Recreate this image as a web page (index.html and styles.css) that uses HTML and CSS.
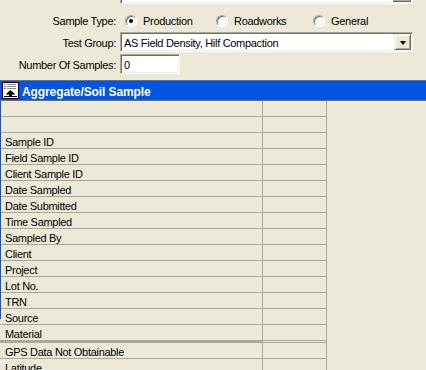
FILE: index.html
```html
<!DOCTYPE html>
<html>
<head>
<meta charset="utf-8">
<link rel="stylesheet" href="styles.css">
</head>
<body>
<div class="top"><div class="topbox"><div class="topbtn"></div></div></div>
<div class="form">
  <div class="frow">
    <span class="lbl">Sample Type:</span>
    <div class="radios">
      <div class="opt o1"><span class="radio on"></span><span>Production</span></div>
      <div class="opt o2"><span class="radio"></span><span>Roadworks</span></div>
      <div class="opt o3"><span class="radio"></span><span>General</span></div>
    </div>
  </div>
  <div class="frow">
    <span class="lbl">Test Group:</span>
    <div class="select"><span class="seltext">AS Field Density, Hilf Compaction</span><span class="dropbtn"><span class="arrow"></span></span></div>
  </div>
  <div class="frow">
    <span class="lbl">Number Of Samples:</span>
    <div class="input"><span class="seltext">0</span></div>
  </div>
</div>
<div class="hdr">
  <svg class="icon" width="17" height="17" viewBox="0 0 17 17">
    <rect x="0.5" y="0.5" width="16" height="16" fill="#fff" stroke="#000"/>
    <g fill="#8c8c8c">
      <rect x="2" y="2" width="2" height="1"/><rect x="5" y="2" width="9" height="1"/>
      <rect x="2" y="4" width="2" height="1"/><rect x="5" y="4" width="9" height="1"/>
      <rect x="2" y="6" width="2" height="1"/><rect x="5" y="6" width="9" height="1"/>
    </g>
    <polygon points="8.5,8 3.5,12.5 13.5,12.5" fill="#000"/>
    <rect x="7" y="12" width="3" height="2" fill="#000"/>
    <rect x="2" y="14" width="13" height="1" fill="#000"/>
  </svg>
  <span class="htext">Aggregate/Soil Sample</span>
</div>
<div class="grid">
  <div class="gr"><div class="c1"></div><div class="c2"></div></div>
  <div class="gr"><div class="c1"></div><div class="c2"></div></div>
  <div class="gr"><div class="c1">Sample ID</div><div class="c2"></div></div>
  <div class="gr"><div class="c1">Field Sample ID</div><div class="c2"></div></div>
  <div class="gr"><div class="c1">Client Sample ID</div><div class="c2"></div></div>
  <div class="gr"><div class="c1">Date Sampled</div><div class="c2"></div></div>
  <div class="gr"><div class="c1">Date Submitted</div><div class="c2"></div></div>
  <div class="gr"><div class="c1">Time Sampled</div><div class="c2"></div></div>
  <div class="gr"><div class="c1">Sampled By</div><div class="c2"></div></div>
  <div class="gr"><div class="c1">Client</div><div class="c2"></div></div>
  <div class="gr"><div class="c1">Project</div><div class="c2"></div></div>
  <div class="gr"><div class="c1">Lot No.</div><div class="c2"></div></div>
  <div class="gr"><div class="c1">TRN</div><div class="c2"></div></div>
  <div class="gr"><div class="c1">Source</div><div class="c2"></div></div>
  <div class="gr"><div class="c1">Material</div><div class="c2"></div></div>
  <div class="gr sep"><div class="c1"></div><div class="c2"></div></div>
  <div class="gr"><div class="c1">GPS Data Not Obtainable</div><div class="c2"></div></div>
  <div class="gr"><div class="c1">Latitude</div><div class="c2"></div></div>
  <div class="blueline"></div>
</div>
</body>
</html>
```
FILE: styles.css
```css
html, body {
  margin: 0;
  padding: 0;
}
body {
  background: #ece9d8;
  font-family: "Liberation Sans", Arial, sans-serif;
  font-size: 11px;
  letter-spacing: -0.3px;
  color: #000;
  width: 426px;
  height: 370px;
  overflow: hidden;
}
.top {
  height: 4px;
  overflow: hidden;
}
.topbox {
  margin-left: 120px;
  width: 293px;
  height: 4px;
  box-sizing: border-box;
  background: #fff;
  border-left: 1px solid #aca899;
  border-right: 1px solid #fff;
  border-bottom: 1px solid #fff;
  box-shadow: inset 1px 0 0 #716f64, inset -1px -1px 0 #f1efe2;
  display: flex;
  justify-content: flex-end;
  align-items: flex-end;
  padding: 0 1px 1px 0;
}
.topbtn {
  width: 18px;
  height: 3px;
  box-sizing: border-box;
  background: #ece9d8;
  border-right: 1px solid #716f64;
  border-bottom: 1px solid #716f64;
  box-shadow: inset -1px -1px 0 #aca899, inset 1px 0 0 #fff;
}
.form {
  padding-top: 6px;
}
.frow {
  display: flex;
  align-items: center;
  height: 20px;
  margin-bottom: 2px;
}
.lbl {
  width: 116px;
  flex: none;
  text-align: right;
  margin-right: 4px;
  padding-top: 1px;
}
.radios {
  display: flex;
  align-items: center;
  padding-left: 5px;
  padding-top: 1px;
}
.opt {
  display: flex;
  align-items: center;
}
.o1 { width: 91px; }
.o2 { width: 97px; }
.radio {
  width: 12px;
  height: 12px;
  box-sizing: border-box;
  border-radius: 50%;
  background: #fff;
  border: 1px solid;
  border-color: #aca899 #fff #fff #aca899;
  box-shadow: inset 1px 1px 0 #716f64, inset -1px -1px 0 #f1efe2;
  margin-right: 6px;
  position: relative;
  flex: none;
}
.radio.on::after {
  content: "";
  position: absolute;
  left: 3px;
  top: 3px;
  width: 4px;
  height: 4px;
  border-radius: 50%;
  background: #000;
}
.select, .input {
  height: 20px;
  box-sizing: border-box;
  background: #fff;
  border: 1px solid;
  border-color: #aca899 #fff #fff #aca899;
  box-shadow: inset 1px 1px 0 #716f64, inset -1px -1px 0 #f1efe2;
  display: flex;
  align-items: center;
  padding: 1px;
}
.select {
  width: 293px;
  justify-content: space-between;
}
.input {
  width: 60px;
}
.seltext {
  padding-left: 2px;
  padding-top: 1px;
}
.dropbtn {
  width: 17px;
  height: 16px;
  box-sizing: border-box;
  background: #ece9d8;
  border: 1px solid;
  border-color: #f1efe2 #716f64 #716f64 #f1efe2;
  box-shadow: inset 1px 1px 0 #fff, inset -1px -1px 0 #aca899;
  display: flex;
  align-items: center;
  justify-content: center;
}
.arrow {
  width: 0;
  height: 0;
  border-left: 3.5px solid transparent;
  border-right: 3.5px solid transparent;
  border-top: 4px solid #000;
  margin-top: 1px;
}
.hdr {
  margin-top: 6px;
  height: 19px;
  background: #0055e5;
  border-top: 1px solid #716f64;
  border-bottom: 1px solid #716f64;
  display: flex;
  align-items: center;
  padding-left: 2px;
  color: #fff;
  font-weight: bold;
  font-size: 12px;
  letter-spacing: -0.1px;
}
.icon {
  display: block;
  margin-right: 3px;
}
.htext {
  padding-top: 3px;
}
.grid {
  position: relative;
}
.gr {
  display: flex;
}
.c1, .c2 {
  height: 16px;
  box-sizing: border-box;
  border-right: 1px solid #aca899;
  border-bottom: 1px solid #aca899;
  line-height: 14px;
  padding-top: 2px;
  white-space: nowrap;
  overflow: hidden;
}
.c1 {
  width: 263px;
  padding-left: 5px;
}
.c2 {
  width: 64px;
}
.sep .c1 {
  height: 2px;
  padding: 0;
  border: none;
  background: #aca899;
}
.sep .c2 {
  height: 2px;
  padding: 0;
}
.blueline {
  position: absolute;
  left: 0;
  top: 0;
  width: 1px;
  height: 218px;
  background: #0055e5;
}
```
